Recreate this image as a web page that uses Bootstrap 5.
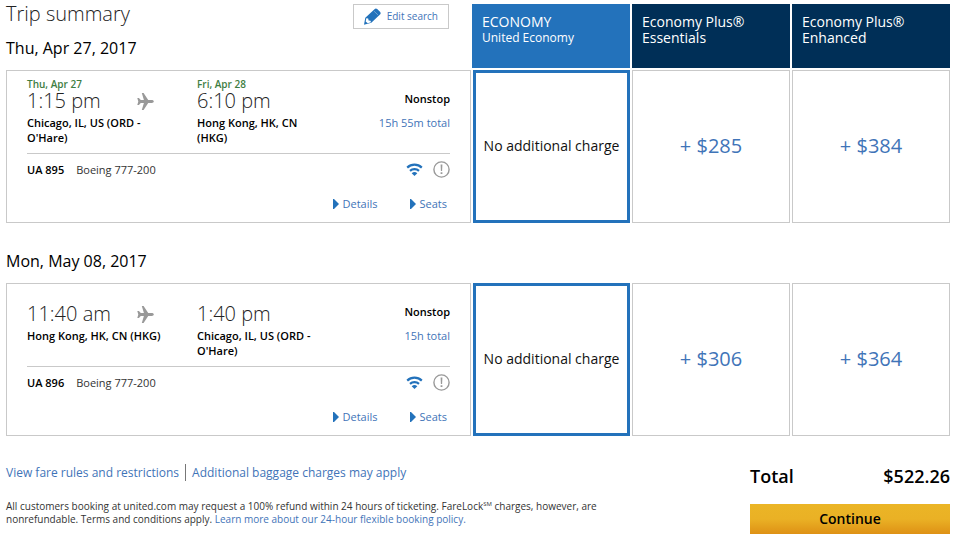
<!DOCTYPE html>
<html lang="en">
<head>
<meta charset="utf-8">
<meta name="viewport" content="width=device-width, initial-scale=1">
<title>Trip summary</title>
<link href="https://cdn.jsdelivr.net/npm/bootstrap@5.3.0/dist/css/bootstrap.min.css" rel="stylesheet">
<style>
  :root { --ua-blue: #2372bb; --ua-navy: #002f57; --ua-line: #c9c9c9; --ua-link: #3f74b8; }
  body { font-family: "Open Sans", "Noto Sans", sans-serif; font-size: 11px; line-height: 15px; color: #000; }
  a { color: var(--ua-link); text-decoration: none; }
  a:hover { text-decoration: underline; }
  .page-pad { padding: 4px 4px 8px 6px; }
  .fare-row { display: flex; gap: 2px; }
  .head-row { margin-bottom: 2px; }
  .trip-side { flex: 1 1 0; min-width: 0; }
  .page-title { font-size: 20px; line-height: 20px; font-weight: 300; color: #222; }
  .day-title { font-size: 16px; line-height: 20px; font-weight: 400; }
  .day-first { margin: 9px 0 10px; }
  .day-next { margin: 28px 0 12px; }
  .edit-btn { border: 1px solid var(--ua-line); border-radius: 0; background: #fff; color: var(--ua-link);
    font-size: 10px; line-height: 15px; padding: 3px 10px; margin-right: 21px; gap: 6px; }
  .fare-head { flex: 0 0 158px; color: #fff; background: var(--ua-navy); font-size: 14px; line-height: 16px; padding: 10px; font-weight: 400; }
  .fare-head.current { background: var(--ua-blue); }
  .fare-sub { font-size: 12px; }
  .flight-card { border: 1px solid var(--ua-line); padding: 7px 20px 11px; }
  .leg-date { font-size: 10px; line-height: 12px; min-height: 12px; color: #3d7d41; }
  .leg-time { font-size: 20px; line-height: 22px; font-weight: 300; color: #222; }
  .leg-city { font-weight: 600; margin-top: 3px; }
  .leg-from { flex: 0 0 170px; }
  .leg-from .leg-time { width: 110px; }
  .leg-from .leg-city { padding-right: 30px; }
  .leg-to { flex: 0 0 120px; }
  .leg-info { padding-top: 13px; }
  .leg-total { margin-top: 9px; color: var(--ua-link); }
  .leg-plane { border-top: 1px solid var(--ua-line); margin-top: 8px; padding-top: 7px; gap: 12px; color: #333; }
  .leg-icons { gap: 10px; }
  .leg-links { gap: 32px; margin-top: 18px; padding-right: 3px; }
  .leg-links a { gap: 4px; }
  .fare-cell { flex: 0 0 158px; border: 1px solid var(--ua-line); background: #fff; color: var(--ua-link); font-size: 20px; padding: 0 0 2px; }
  .fare-cell.picked { flex-basis: 157px; border: 3px solid var(--ua-blue); color: #111; font-size: 14px; }
  .foot { padding-top: 29px; }
  .foot-links { font-size: 12px; line-height: 16px; }
  .foot-links a + a { border-left: 1px solid #777; margin-left: 6px; padding-left: 6px; }
  .fine-print { font-size: 10px; line-height: 13px; color: #333; margin-top: 19px; max-width: 600px; }
  .fine-print sup { font-size: 6px; line-height: 1; top: -4px; }
  .pay-box { flex: 0 0 200px; }
  .total-line { font-size: 18px; line-height: 22px; font-weight: 600; }
  .go-btn { border: 0; font-size: 14px; line-height: 20px; font-weight: 600; padding: 5px; margin-top: 17px; color: #000;
    background: linear-gradient(#ebb526 0%, #eab125 50%, #de9115 100%); }
  svg { display: block; flex: none; }
</style>
<script src="https://cdn.jsdelivr.net/npm/bootstrap@5.3.0/dist/js/bootstrap.bundle.min.js"></script>
</head>
<body>
<svg width="0" height="0" class="position-absolute" aria-hidden="true">
  <symbol id="plane" viewBox="0 0 17 17"><path fill="#999" d="M4.8 0h1.8l4.6 7.1h3.6c1 0 2 .6 2 1.4s-1 1.4-2 1.4h-3.6L6.6 17H4.8l2.1-7.1H3.8L1.9 12H.3l1-3.5-1-3.5h1.6l1.9 2.1h3.1z"/></symbol>
  <symbol id="wifi" viewBox="0 0 16 13"><g fill="none" stroke="#2372bb" stroke-width="2.2"><path d="M.7 4.6a10.6 10.6 0 0 1 14.6 0"/><path d="M3.5 7.9a6.7 6.7 0 0 1 9 0"/></g><path fill="#2372bb" d="M8 13 5.2 10.2a4.1 4.1 0 0 1 5.6 0z"/></symbol>
  <symbol id="alert" viewBox="0 0 17 17"><circle cx="8.5" cy="8.5" r="7.6" fill="none" stroke="#999" stroke-width="1.4"/><path fill="#999" d="M7.6 3.6h1.8L9.1 10H7.9zM7.6 11.3h1.8V13H7.6z"/></symbol>
  <symbol id="caret" viewBox="0 0 6 10"><path fill="#2372bb" d="M0 0h1l5 5-5 5H0z"/></symbol>
  <symbol id="pencil" viewBox="0 0 17 17"><path fill="#2372bb" d="M10.5 1.2Q11.8-.2 13.2 1l2.8 2.8q1.3 1.4 0 2.8L7.3 14.8 0 16.8l1.3-7z"/><path fill="#fff" d="m2.3 10.2 1.9.2.4 2 2 .3.3 1.6-3.2 1-2-1.9z"/><path d="m10.1 3.2 3.8 3.7" stroke="#fff" stroke-width=".7" opacity=".5"/></symbol>
</svg>

<main class="page-pad">
  <header class="fare-row head-row">
    <div class="trip-side">
      <div class="d-flex justify-content-between align-items-start">
        <h1 class="page-title mb-0">Trip summary</h1>
        <button type="button" class="btn edit-btn d-flex align-items-center"><svg width="17" height="17"><use href="#pencil"/></svg>Edit search</button>
      </div>
      <h2 class="day-title day-first">Thu, Apr 27, 2017</h2>
    </div>
    <div class="fare-head current">ECONOMY<div class="fare-sub">United Economy</div></div>
    <div class="fare-head">Economy Plus® Essentials</div>
    <div class="fare-head">Economy Plus® Enhanced</div>
  </header>

  <section class="fare-row">
    <article class="trip-side flight-card">
      <div class="d-flex">
        <div class="leg-from">
          <div class="leg-date fw-semibold">Thu, Apr 27</div>
          <div class="d-flex align-items-center"><div class="leg-time">1:15 pm</div><svg width="17" height="17"><use href="#plane"/></svg></div>
          <div class="leg-city">Chicago, IL, US (ORD - O'Hare)</div>
        </div>
        <div class="leg-to">
          <div class="leg-date fw-semibold">Fri, Apr 28</div>
          <div class="leg-time">6:10 pm</div>
          <div class="leg-city">Hong Kong, HK, CN (HKG)</div>
        </div>
        <div class="leg-info flex-fill text-end"><div class="fw-semibold">Nonstop</div><div class="leg-total">15h 55m total</div></div>
      </div>
      <div class="leg-plane d-flex align-items-center">
        <span class="fw-semibold text-black">UA 895</span><span>Boeing 777-200</span>
        <div class="leg-icons d-flex align-items-center ms-auto"><svg width="17" height="13"><use href="#wifi"/></svg><svg width="17" height="17"><use href="#alert"/></svg></div>
      </div>
      <div class="leg-links d-flex justify-content-end">
        <a href="#" class="d-flex align-items-center"><svg width="6" height="10"><use href="#caret"/></svg>Details</a>
        <a href="#" class="d-flex align-items-center"><svg width="6" height="10"><use href="#caret"/></svg>Seats</a>
      </div>
    </article>
    <button type="button" class="fare-cell picked">No additional charge</button>
    <button type="button" class="fare-cell">+ $285</button>
    <button type="button" class="fare-cell">+ $384</button>
  </section>

  <h2 class="day-title day-next">Mon, May 08, 2017</h2>

  <section class="fare-row">
    <article class="trip-side flight-card">
      <div class="d-flex">
        <div class="leg-from">
          <div class="leg-date"></div>
          <div class="d-flex align-items-center"><div class="leg-time">11:40 am</div><svg width="17" height="17"><use href="#plane"/></svg></div>
          <div class="leg-city">Hong Kong, HK, CN (HKG)</div>
        </div>
        <div class="leg-to">
          <div class="leg-date"></div>
          <div class="leg-time">1:40 pm</div>
          <div class="leg-city">Chicago, IL, US (ORD - O'Hare)</div>
        </div>
        <div class="leg-info flex-fill text-end"><div class="fw-semibold">Nonstop</div><div class="leg-total">15h total</div></div>
      </div>
      <div class="leg-plane d-flex align-items-center">
        <span class="fw-semibold text-black">UA 896</span><span>Boeing 777-200</span>
        <div class="leg-icons d-flex align-items-center ms-auto"><svg width="17" height="13"><use href="#wifi"/></svg><svg width="17" height="17"><use href="#alert"/></svg></div>
      </div>
      <div class="leg-links d-flex justify-content-end">
        <a href="#" class="d-flex align-items-center"><svg width="6" height="10"><use href="#caret"/></svg>Details</a>
        <a href="#" class="d-flex align-items-center"><svg width="6" height="10"><use href="#caret"/></svg>Seats</a>
      </div>
    </article>
    <button type="button" class="fare-cell picked">No additional charge</button>
    <button type="button" class="fare-cell">+ $306</button>
    <button type="button" class="fare-cell">+ $364</button>
  </section>

  <footer class="foot d-flex justify-content-between">
    <div>
      <div class="foot-links"><a href="#">View fare rules and restrictions</a><a href="#">Additional baggage charges may apply</a></div>
      <p class="fine-print mb-0">All customers booking at united.com may request a 100% refund within 24 hours of ticketing. FareLock<sup>SM</sup> charges, however, are nonrefundable. Terms and conditions apply. <a href="#">Learn more about our 24-hour flexible booking policy.</a></p>
    </div>
    <div class="pay-box">
      <div class="total-line d-flex justify-content-between"><span>Total</span><span>$522.26</span></div>
      <button type="button" class="btn go-btn rounded-0 w-100">Continue</button>
    </div>
  </footer>
</main>
</body>
</html>
